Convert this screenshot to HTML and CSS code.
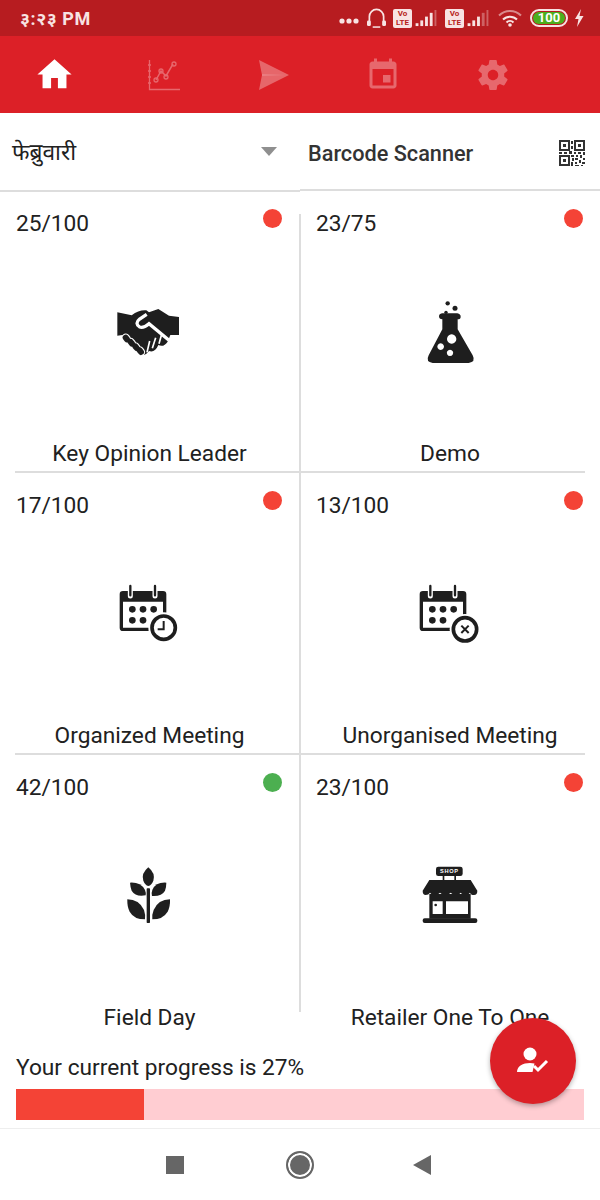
FILE: index.html
```html
<!DOCTYPE html>
<html lang="en">
<head>
    <meta charset="UTF-8">
    <meta name="viewport" content="width=device-width, initial-scale=1.0">
    <title>Dashboard</title>
    <link rel="stylesheet" href="styles.css">
</head>
<body>
    <div class="phone">
        <!-- Status bar -->
        <div class="status-bar">
            <span class="clock">३:२३ PM</span>
            <div class="status-icons">
                <svg class="st-dots" viewBox="0 0 20 6"><circle cx="3" cy="3" r="2.6"/><circle cx="10" cy="3" r="2.6"/><circle cx="17" cy="3" r="2.6"/></svg>
                <svg class="st-phones" viewBox="0 0 20 22"><path d="M2.500 18V9a7.500 7.500 0 0 1 15 0v9" fill="none" stroke="#f8e3e3" stroke-width="1.8"/><rect x="0" y="13" width="4" height="6" rx="1.5"/><rect x="16" y="13" width="4" height="6" rx="1.5"/><path d="M6 20h8" stroke="#f8e3e3" stroke-width="1.6"/></svg>
                <span class="volte">Vo<br>LTE</span>
                <svg class="st-signal" viewBox="0 0 22 18"><rect x="0" y="14" width="3" height="3"/><rect x="5" y="11" width="3" height="6"/><rect x="10" y="7" width="3" height="10"/><rect x="15" y="3" width="3" height="14"/><rect x="20" y="0" width="2" height="17" opacity=".35"/></svg>
                <span class="volte second">Vo<br>LTE</span>
                <svg class="st-signal" viewBox="0 0 22 18"><rect x="0" y="14" width="3" height="3"/><rect x="5" y="11" width="3" height="6"/><rect x="10" y="7" width="3" height="10"/><rect x="15" y="3" width="3" height="14" opacity=".35"/><rect x="20" y="0" width="2" height="17" opacity=".35"/></svg>
                <svg class="st-wifi" viewBox="0 0 24 18"><path d="M1 6.500a15.500 15.500 0 0 1 22 0" fill="none" stroke="#f8e3e3" stroke-opacity=".55" stroke-width="2"/><path d="M5 10.500a10 10 0 0 1 14 0" fill="none" stroke="#f8e3e3" stroke-width="2"/><path d="M8.500 13.500a5 5 0 0 1 7 0" fill="none" stroke="#f8e3e3" stroke-width="2"/><circle cx="12" cy="16" r="1.8"/></svg>
                <span class="battery">100</span>
                <svg class="st-bolt" viewBox="0 0 10 18"><path d="M7 0L1 10h3.500L3 18l6.500-11H5.500z"/></svg>
            </div>
        </div>

        <!-- Tabs -->
        <div class="tabs">
            <svg class="tab-icon home" viewBox="0 0 24 24"><path d="M10 20v-6h4v6h5v-8h3L12 3 2 12h3v8z"/></svg>
            <svg class="tab-icon chart off" viewBox="0 0 32 32"><path d="M1.500 1v29.500H32M0 6h3M0 12h3M0 18h3M0 24h3" fill="none" stroke="#fff" stroke-width="1.300"/><path d="M8 21l5-9 5 5 7-12" fill="none" stroke="#fff" stroke-width="1.500"/><circle cx="8" cy="21" r="2" fill="none" stroke="#fff" stroke-width="1.300"/><circle cx="13" cy="12" r="2" fill="none" stroke="#fff" stroke-width="1.300"/><circle cx="18" cy="18" r="2" fill="none" stroke="#fff" stroke-width="1.300"/><circle cx="26" cy="5" r="2" fill="none" stroke="#fff" stroke-width="1.300"/></svg>
            <svg class="tab-icon send off" viewBox="0 0 30 30"><path d="M0 0L30 15 0 30 3 15z" fill-opacity=".75"/><path d="M3 14L26 15 3 16z"/></svg>
            <svg class="tab-icon event off" viewBox="0 0 24 24"><path d="M17 12h-5v5h5v-5zM16 1v2H8V1H6v2H5c-1.110 0-1.990.9-1.990 2L3 19c0 1.100.89 2 2 2h14c1.100 0 2-.9 2-2V5c0-1.100-.9-2-2-2h-1V1h-2zm3 18H5V8h14v11z"/></svg>
            <svg class="tab-icon gear off" viewBox="0 0 24 24"><path d="M19.430 12.980c.04-.32.07-.64.07-.98s-.03-.66-.07-.98l2.110-1.650c.19-.15.24-.42.12-.64l-2-3.460c-.12-.22-.39-.3-.61-.22l-2.490 1c-.52-.4-1.080-.73-1.690-.98l-.38-2.650C14.460 2.180 14.250 2 14 2h-4c-.25 0-.46.18-.49.42l-.38 2.650c-.61.25-1.170.59-1.690.98l-2.490-1c-.23-.09-.49 0-.61.22l-2 3.460c-.13.22-.07.49.12.64l2.110 1.650c-.04.32-.07.65-.07.98s.03.66.07.98l-2.110 1.650c-.19.15-.24.42-.12.64l2 3.460c.12.22.39.3.61.22l2.490-1c.52.4 1.080.73 1.690.98l.38 2.650c.03.24.24.42.49.42h4c.25 0 .46-.18.49-.42l.38-2.650c.61-.25 1.170-.59 1.690-.98l2.490 1c.23.09.49 0 .61-.22l2-3.460c.12-.22.07-.49-.12-.64l-2.110-1.650zM12 15.500c-1.930 0-3.500-1.570-3.500-3.500s1.570-3.500 3.500-3.500 3.500 1.570 3.500 3.500-1.570 3.500-3.500 3.500z"/></svg>
        </div>

        <!-- Month + scanner -->
        <div class="filter-row">
            <div class="month-picker">
                <span>फेब्रुवारी</span>
                <span class="caret"></span>
            </div>
            <div class="scanner">
                <span>Barcode Scanner</span>
                <svg class="qr" viewBox="0 0 26 26" shape-rendering="crispEdges">
                    <path d="M0 0h11v11H0zM2 2v7h7V2zM15 0h11v11H15zM17 2v7h7V2zM0 15h11v11H0zM2 17v7h7v-7z" fill-rule="evenodd"/>
                    <path d="M4 4h3v3H4zM19 4h3v3h-3zM4 19h3v3H4zM12 1h2v3h-2zM12 6h2v3h-2zM0 12h3v2H0zM5 12h3v2H5zM10 11h3v3h-3zM15 12h2v2h-2zM19 12h3v2h-3zM24 12h2v3h-2zM12 15h3v2h-3zM17 15h2v2h-2zM21 15h2v3h-2zM13 18h2v3h-2zM16 18h3v2h-3zM24 18h2v2h-2zM12 22h2v4h-2zM16 22h2v2h-2zM20 20h2v3h-2zM23 22h3v2h-3zM16 25h4v1h-4zM22 25h2v1h-2z"/>
                </svg>
            </div>
        </div>

        <!-- Activity cells -->
        <div class="board">
            <div class="center-line"></div>

            <div class="cell left">
                <div class="cell-top"><span>25/100</span><span class="dot"></span></div>
                <div class="cell-icon">
                    <svg width="100" height="80" viewBox="0 0 300 240">
                        <path d="M55 64L98 73Q120 56 142 58L150 64L178 54L210 74L240 78V132L214 132L206 152Q194 170 178 162Q168 186 150 180Q138 196 124 190L70 132L55 134Z"/>
                        <path d="M143 70L122 84Q106 97 122 108Q134 112 150 98L210 148" fill="none" stroke="#fff" stroke-width="10"/>
                        <path d="M152 150L144 184M170 140L160 172M188 130L180 158" stroke="#fff" stroke-width="5" fill="none"/>
                        <path d="M80 140L84 145M95 153L99 158M109 166L113 171M122 178L126 183" stroke="#fff" stroke-width="25" stroke-linecap="round"/>
                        <path d="M80 140L84 145M95 153L99 158M109 166L113 171M122 178L126 183" stroke="#1e1e1e" stroke-width="18" stroke-linecap="round"/>
                    </svg>
                </div>
                <div class="cell-label">Key Opinion Leader</div>
            </div>
            <div class="cell">
                <div class="cell-top"><span>23/75</span><span class="dot"></span></div>
                <div class="cell-icon">
                    <svg width="80" height="80" viewBox="0 3 240 240">
                        <path fill-rule="evenodd" d="M96 70H142Q152 72 152 80Q152 88 143 88V118L188 196Q198 216 176 219H68Q46 216 56 196L97 118V88Q87 88 87 79Q87 72 96 70ZM125 133a14 14 0 1 0 .01 0ZM92 160a10 10 0 1 0 .01 0ZM120 179a9.500 9.500 0 1 0 .01 0Z"/>
                        <circle cx="113" cy="40" r="6.500"/><circle cx="135" cy="55" r="7.500"/><circle cx="108" cy="67" r="5"/>
                    </svg>
                </div>
                <div class="cell-label">Demo</div>
            </div>
            <div class="rule"></div>

            <div class="cell left">
                <div class="cell-top"><span>17/100</span><span class="dot"></span></div>
                <div class="cell-icon">
                    <svg width="85" height="75" viewBox="8 0 255 225">
                        <use href="#calendar"/>
                        <circle cx="178" cy="155" r="46" fill="#fff"/>
                        <circle cx="178" cy="155" r="35" fill="#fff" stroke="#1e1e1e" stroke-width="11"/>
                        <path d="M178 135V160H160" fill="none" stroke="#1e1e1e" stroke-width="6"/>
                    </svg>
                </div>
                <div class="cell-label">Organized Meeting</div>
            </div>
            <div class="cell">
                <div class="cell-top"><span>13/100</span><span class="dot"></span></div>
                <div class="cell-icon">
                    <svg width="85" height="75" viewBox="8 0 255 225">
                        <use href="#calendar"/>
                        <circle cx="182" cy="160" r="46" fill="#fff"/>
                        <circle cx="182" cy="160" r="35" fill="#fff" stroke="#1e1e1e" stroke-width="11"/>
                        <path d="M171 149L193 171M193 149L171 171" fill="none" stroke="#1e1e1e" stroke-width="6"/>
                    </svg>
                </div>
                <div class="cell-label">Unorganised Meeting</div>
            </div>
            <div class="rule"></div>

            <div class="cell left">
                <div class="cell-top"><span>42/100</span><span class="dot green"></span></div>
                <div class="cell-icon">
                    <svg width="80" height="70" viewBox="0 0 240 210">
                        <rect x="113" y="85" width="10" height="104" rx="2"/>
                        <path d="M118 22Q140 40 133 62Q128 75 118 78Q108 75 103 62Q96 40 118 22Z"/>
                        <path d="M63 68Q95 66 108 90Q112 100 110 106Q80 112 68 92Q64 82 63 68Z"/>
                        <path d="M172 68Q140 66 130 90Q126 100 129 108Q158 110 168 92Q172 82 172 68Z"/>
                        <path d="M55 118Q90 118 105 150Q110 165 108 178Q75 178 62 155Q54 140 55 118Z"/>
                        <path d="M183 118Q148 118 134 150Q128 165 130 178Q162 178 176 155Q184 140 183 118Z"/>
                    </svg>
                </div>
                <div class="cell-label">Field Day</div>
            </div>
            <div class="cell">
                <div class="cell-top"><span>23/100</span><span class="dot"></span></div>
                <div class="cell-icon">
                    <svg width="80" height="70" viewBox="0 0 240 210">
                        <rect x="78" y="20" width="80" height="28" rx="7"/>
                        <text class="shop-sign" x="118" y="40" text-anchor="middle">SHOP</text>
                        <rect x="98" y="46" width="5" height="16"/><rect x="133" y="46" width="5" height="16"/>
                        <path d="M58 60H182L202 92Q202 105 192 105Q182 105 180 98Q176 105 166 105Q156 105 152 98Q148 105 138 105Q128 105 122 98Q116 105 106 105Q96 105 90 98Q84 105 74 105Q64 105 60 98Q56 105 47 105Q38 105 38 92Z"/>
                        <path fill-rule="evenodd" d="M58 102H182V176H58ZM68 124V162H98V124ZM108 124V162H174V124Z"/>
                        <circle cx="77" cy="135" r="4"/>
                        <rect x="38" y="175" width="164" height="14" rx="6"/>
                    </svg>
                </div>
                <div class="cell-label">Retailer One To One</div>
            </div>
        </div>

        <!-- Progress -->
        <div class="progress">
            <div class="progress-label">Your current progress is 27%</div>
            <div class="progress-track">
                <div class="progress-fill" style="width: 128px"></div>
            </div>
        </div>

        <!-- Android nav -->
        <div class="nav-bar">
            <span class="nav-square"></span>
            <span class="nav-circle"></span>
            <span class="nav-back"></span>
        </div>

        <button class="fab">
            <svg width="34" height="28" viewBox="0 0 34 28"><circle cx="14" cy="7" r="6.500" fill="#fff"/><path d="M1 25c0-6 6-9 13-9 1.500 0 3 .2 4.500.5l-2 8.500z" fill="#fff"/><path d="M18 19l4 4 9-9" fill="none" stroke="#fff" stroke-width="3"/></svg>
        </button>

        <svg class="defs" width="0" height="0">
            <defs>
                <g id="calendar">
                    <path fill-rule="evenodd" d="M56 45H176Q186 45 186 55V155Q186 165 176 165H56Q46 165 46 155V55Q46 45 56 45ZM56 77V155H176V77Z"/>
                    <path d="M78 30V60M152 30V60" stroke="#fff" stroke-width="15" stroke-linecap="round"/>
                    <path d="M78 30V58M152 30V58" stroke="#1e1e1e" stroke-width="7" stroke-linecap="round"/>
                    <circle cx="84" cy="100" r="10"/><circle cx="116" cy="100" r="10"/><circle cx="148" cy="100" r="10"/>
                    <circle cx="84" cy="133" r="10"/><circle cx="116" cy="133" r="10"/>
                </g>
            </defs>
        </svg>
    </div>
</body>
</html>
```

FILE: styles.css
```css
* {
    box-sizing: border-box;
}
body {
    font-family: Roboto, "Noto Sans", sans-serif;
    background-color: #fff;
    color: #212121;
    margin: 0;
}
.phone {
    position: relative;
    width: 600px;
    height: 1200px;
    overflow: hidden;
}
svg {
    fill: #1e1e1e;
    display: block;
}
.defs {
    position: absolute;
}

/* status bar */
.status-bar {
    height: 36px;
    background-color: #b71c20;
    color: #f8e3e3;
    display: flex;
    align-items: center;
    justify-content: space-between;
    padding: 0 16px 0 20px;
}
.clock {
    font-size: 18px;
    font-weight: 700;
    letter-spacing: 0.5px;
}
.status-icons {
    display: flex;
    align-items: center;
}
.status-icons svg {
    fill: #f8e3e3;
}
.st-dots {
    width: 20px;
    height: 6px;
    margin-top: 6px;
}
.st-phones {
    width: 19px;
    height: 21px;
    margin-left: 8px;
}
.volte {
    width: 19px;
    height: 19px;
    margin-left: 7px;
    border-radius: 2px;
    background-color: #f8e3e3;
    color: #b71c20;
    font-size: 8px;
    font-weight: 700;
    line-height: 9px;
    text-align: center;
}
.volte.second {
    margin-left: 8px;
}
.st-signal {
    width: 22px;
    height: 17px;
    margin-left: 3px;
}
.st-wifi {
    width: 24px;
    height: 18px;
    margin-left: 9px;
}
.battery {
    width: 38px;
    height: 18px;
    margin-left: 8px;
    border: 2px solid #f8e3e3;
    border-radius: 9px;
    background-color: #4caf1e;
    background-clip: content-box;
    padding: 1px;
    color: #fff;
    font-size: 13px;
    font-weight: 700;
    line-height: 12px;
    text-align: center;
}
.st-bolt {
    width: 10px;
    height: 18px;
    margin-left: 6px;
}

/* tabs */
.tabs {
    height: 77px;
    background-color: #dc2027;
    display: grid;
    grid-template-columns: repeat(5, 109.5px);
    align-items: center;
    justify-items: center;
}
.tab-icon {
    fill: #fff;
}
.tab-icon.off {
    opacity: 0.32;
}
.home {
    width: 41px;
    height: 41px;
}
.chart {
    width: 32px;
    height: 32px;
}
.send {
    width: 30px;
    height: 30px;
}
.tab-icon.send {
    opacity: 0.42;
}
.event {
    width: 36px;
    height: 36px;
}
.gear {
    width: 36px;
    height: 36px;
}

/* month + scanner */
.filter-row {
    height: 79px;
    display: grid;
    grid-template-columns: 300px 300px;
    font-size: 22.7px;
}
.month-picker {
    display: flex;
    align-items: center;
    justify-content: space-between;
    padding: 0 23px 0 12px;
    border-bottom: 2px solid #ddd;
}
.caret {
    width: 0;
    height: 0;
    border-left: 8px solid transparent;
    border-right: 8px solid transparent;
    border-top: 9px solid #8f8f8f;
}
.scanner {
    display: flex;
    align-items: center;
    justify-content: space-between;
    padding: 4px 15px 0 8px;
    margin-bottom: 1px;
    border-bottom: 2px solid #ddd;
    color: #333;
    font-size: 21.7px;
    font-weight: 500;
}
.qr {
    width: 26px;
    height: 26px;
    fill: #333;
}

/* activity cells */
.board {
    position: relative;
    margin-top: -1px;
    display: grid;
    grid-template-columns: 300px 300px;
}
.center-line {
    position: absolute;
    left: 299px;
    top: 23px;
    width: 2px;
    height: 798px;
    background-color: #ddd;
}
.cell {
    height: 280px;
    display: flex;
    flex-direction: column;
    padding: 19px 17px 3px 16px;
    font-size: 22.7px;
    line-height: 28px;
}
.cell.left {
    padding-right: 18px;
}
.cell-top {
    display: flex;
    justify-content: space-between;
}
.dot {
    width: 19px;
    height: 19px;
    margin-top: -1px;
    border-radius: 50%;
    background-color: #f44336;
}
.dot.green {
    background-color: #4caf50;
}
.cell-icon {
    flex: 1;
    display: flex;
    align-items: center;
    justify-content: center;
    padding-bottom: 16px;
}
.cell-label {
    margin: 0 -17px 0 -16px;
    text-align: center;
}
.rule {
    grid-column: 1 / -1;
    height: 2px;
    margin: 0 15px;
    background-color: #ddd;
}
.shop-sign {
    fill: #fff;
    font-family: "Liberation Sans", sans-serif;
    font-size: 17px;
    font-weight: 700;
    letter-spacing: 2px;
}

/* progress */
.progress {
    padding: 19px 16px 0 16px;
}
.progress-label {
    font-size: 22.7px;
    line-height: 28px;
    margin-bottom: 7px;
}
.progress-track {
    height: 31px;
    background-color: #ffcdd2;
}
.progress-fill {
    height: 100%;
    background-color: #f44336;
}

/* android nav */
.nav-bar {
    position: absolute;
    left: 0;
    right: 0;
    bottom: 0;
    height: 72px;
    border-top: 1px solid #eee;
    display: flex;
    align-items: center;
    padding-left: 166px;
}
.nav-square {
    width: 18px;
    height: 18px;
    background-color: #666;
}
.nav-circle {
    width: 28px;
    height: 28px;
    margin-left: 102px;
    border: 2px solid #666;
    border-radius: 50%;
    background-color: #666;
    box-shadow: inset 0 0 0 2px #fff;
}
.nav-back {
    width: 0;
    height: 0;
    margin-left: 99px;
    border-top: 10px solid transparent;
    border-bottom: 10px solid transparent;
    border-right: 18px solid #666;
}

.fab {
    position: absolute;
    left: 490px;
    top: 1018px;
    width: 86px;
    height: 86px;
    border: none;
    border-radius: 50%;
    background-color: #dc2027;
    box-shadow: 0 2px 5px rgba(0, 0, 0, 0.3);
    display: flex;
    align-items: center;
    justify-content: center;
    padding: 0;
}
```
